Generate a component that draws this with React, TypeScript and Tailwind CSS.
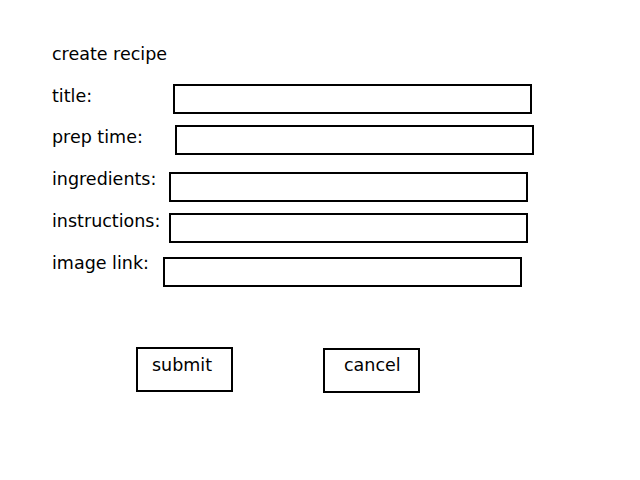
const rows = [
  { label: "title:", labelW: "w-[121px]", labelMt: "mt-[3px]", rowMt: "mt-[20px]" },
  { label: "prep time:", labelW: "w-[123px]", labelMt: "mt-[3px]", rowMt: "mt-[11px]" },
  { label: "ingredients:", labelW: "w-[117px]", labelMt: "-mt-[2px]", rowMt: "mt-[17px]" },
  { label: "instructions:", labelW: "w-[117px]", labelMt: "-mt-px", rowMt: "mt-[11px]" },
  { label: "image link:", labelW: "w-[111px]", labelMt: "-mt-[3px]", rowMt: "mt-[14px]" },
];

export default function App() {
  return (
    <main className="min-h-screen w-full bg-white pl-[52px] pt-[45px] text-[17.5px] leading-[19px] text-black [font-family:'DejaVu_Sans',sans-serif]">
      <h1>create recipe</h1>

      {rows.map((row) => (
        <div className={`flex items-start ${row.rowMt}`} key={row.label}>
          <span className={`${row.labelW} ${row.labelMt} shrink-0`}>{row.label}</span>
          <div className="h-[30px] w-[359px] border-2 border-black" />
        </div>
      ))}

      <div className="ml-[84px] mt-[60px] flex items-start gap-[90px]">
        <button className="flex h-[45px] w-[97px] items-start border-2 border-black pl-[14px] pt-[7px]">
          submit
        </button>
        <button className="mt-px flex h-[45px] w-[97px] items-start border-2 border-black pl-[19px] pt-[6px]">
          cancel
        </button>
      </div>
    </main>
  );
}
